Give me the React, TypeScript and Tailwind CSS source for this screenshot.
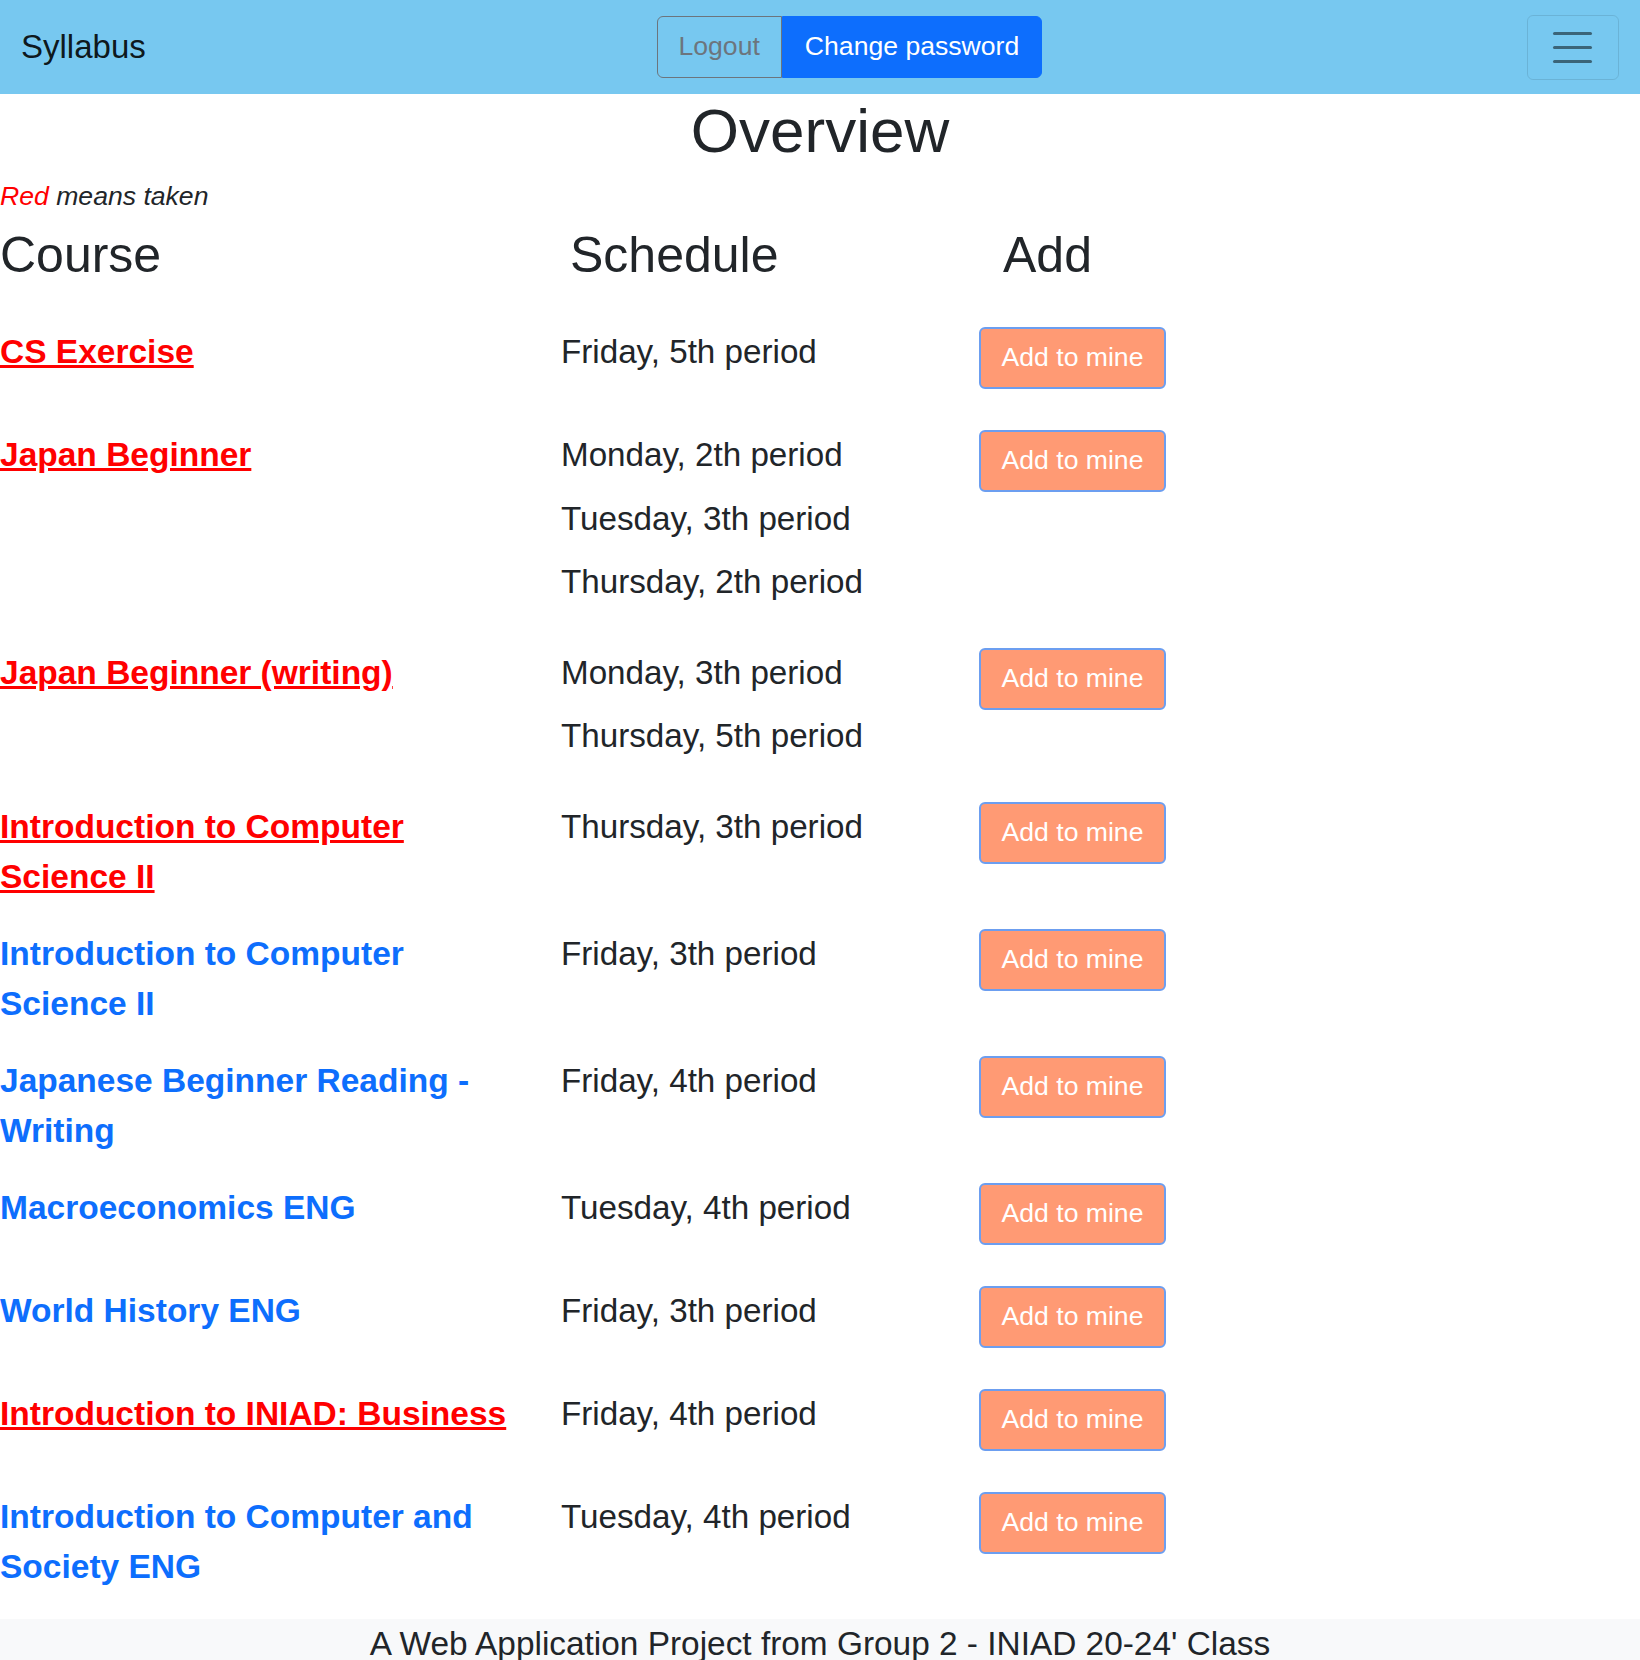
import React from "react";

interface Course {
  name: string;
  taken: boolean;
  schedule: string[];
}

const courses: Course[] = [
  { name: "CS Exercise", taken: true, schedule: ["Friday, 5th period"] },
  {
    name: "Japan Beginner",
    taken: true,
    schedule: ["Monday, 2th period", "Tuesday, 3th period", "Thursday, 2th period"],
  },
  {
    name: "Japan Beginner (writing)",
    taken: true,
    schedule: ["Monday, 3th period", "Thursday, 5th period"],
  },
  { name: "Introduction to Computer Science II", taken: true, schedule: ["Thursday, 3th period"] },
  { name: "Introduction to Computer Science II", taken: false, schedule: ["Friday, 3th period"] },
  { name: "Japanese Beginner Reading - Writing", taken: false, schedule: ["Friday, 4th period"] },
  { name: "Macroeconomics ENG", taken: false, schedule: ["Tuesday, 4th period"] },
  { name: "World History ENG", taken: false, schedule: ["Friday, 3th period"] },
  { name: "Introduction to INIAD: Business", taken: true, schedule: ["Friday, 4th period"] },
  { name: "Introduction to Computer and Society ENG", taken: false, schedule: ["Tuesday, 4th period"] },
];

const Navbar: React.FC = () => (
  <nav className="h-[94px] bg-[#77c8f0] px-[21px] flex items-center justify-between">
    <a className="text-[33px] leading-[49.5px] text-black/90 mr-[26px]">Syllabus</a>
    <div className="flex h-[62px] text-[26.6px] leading-[39.6px]">
      <button className="px-[21px] border border-[#6c757d] text-[#6c757d] rounded-l-[6px]">
        Logout
      </button>
      <button className="px-[22px] border border-[#0d6efd] bg-[#0d6efd] text-white rounded-r-[6px]">
        Change password
      </button>
    </div>
    <button className="w-[92px] h-[65px] border border-black/10 rounded-[6px] flex flex-col items-center justify-center gap-[11px]">
      <span className="block w-[39px] h-[3px] rounded-full bg-[rgba(0,0,0,0.5)]"></span>
      <span className="block w-[39px] h-[3px] rounded-full bg-[rgba(0,0,0,0.5)]"></span>
      <span className="block w-[39px] h-[3px] rounded-full bg-[rgba(0,0,0,0.5)]"></span>
    </button>
  </nav>
);

const CourseRow: React.FC<{ course: Course }> = ({ course }) => (
  <div className="grid grid-cols-[561px_418px_1fr] pt-[19.5px] pb-[7.5px]">
    <div className="pr-[40px]">
      <a
        className={`text-[33.5px] leading-[50px] font-bold ${
          course.taken ? "text-[#ff0000] underline" : "text-[#0d6efd]"
        }`}
      >
        {course.name}
      </a>
    </div>
    <div>
      {course.schedule.map((s, i) => (
        <p key={i} className="text-[33.2px] leading-[49.5px] mb-[14px] text-[#212529]">
          {s}
        </p>
      ))}
    </div>
    <div className="pb-[14px]">
      <button className="w-[187px] h-[62px] bg-[#ff9a74] border-2 border-[#6c9ef0] rounded-[6px] text-white text-[26.6px]">
        Add to mine
      </button>
    </div>
  </div>
);

export default function App() {
  return (
    <div className="min-h-[1660px] bg-white text-[#212529] font-['Liberation_Sans',Arial,sans-serif]">
      <Navbar />
      <h1 className="text-center text-[62px] leading-[73px]">Overview</h1>
      <p className="mt-[10px] text-[26.6px] leading-[39.6px] italic">
        <span className="text-[#ff0000]">Red</span> means taken
      </p>
      <div className="grid grid-cols-[561px_418px_1fr] mt-[8px] text-[50px] leading-[60px]">
        <div>Course</div>
        <div className="pl-[9px]">Schedule</div>
        <div className="pl-[24px]">Add</div>
      </div>
      <div className="mt-[23px]">
        {courses.map((c, i) => (
          <CourseRow key={i} course={c} />
        ))}
      </div>
      <footer className="mt-[20px] bg-[#f8f9fa] text-center text-[33.4px] leading-[49.5px] pb-[20px]">
        A Web Application Project from Group 2 - INIAD 20-24' Class
      </footer>
    </div>
  );
}
